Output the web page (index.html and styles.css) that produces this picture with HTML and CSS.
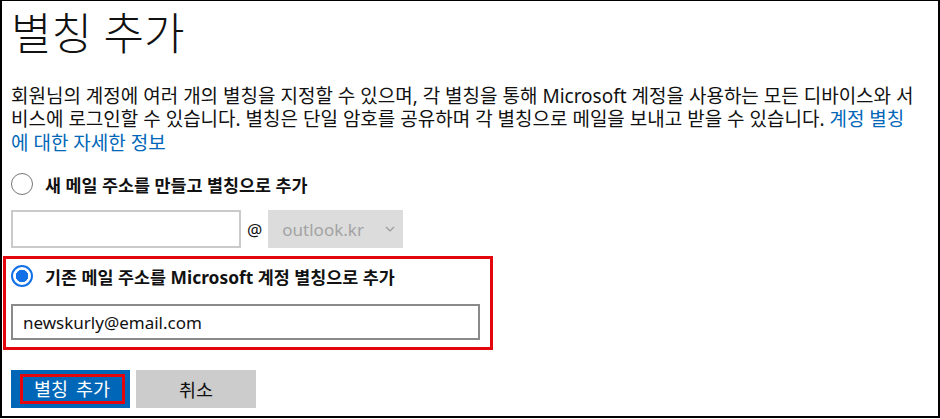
FILE: index.html
```html
<!DOCTYPE html>
<html lang="ko">
<head>
    <meta charset="UTF-8">
    <meta name="viewport" content="width=device-width, initial-scale=1.0">
    <title>별칭 추가</title>
    <link rel="stylesheet" href="styles.css">
</head>
<body>
    <div class="frame">
        <h1 class="page-title">별칭 추가</h1>

        <p class="intro">회원님의 계정에 여러 개의 별칭을 지정할 수 있으며, 각 별칭을 통해 Microsoft 계정을 사용하는 모든 디바이스와 서비스에 로그인할 수 있습니다. 별칭은 단일 암호를 공유하며 각 별칭으로 메일을 보내고 받을 수 있습니다. <a href="#" class="link">계정 별칭에 대한 자세한 정보</a></p>

        <!-- 새 메일 주소 -->
        <label class="option">
            <input type="radio" name="alias-type" class="radio">
            <span>새 메일 주소를 만들고 별칭으로 추가</span>
        </label>

        <div class="new-address">
            <input type="text" class="field field-light">
            <span class="at">@</span>
            <div class="domain">
                <span>outlook.kr</span>
                <svg class="chevron" width="10" height="6" viewBox="0 0 10 6">
                    <polyline points="1,1 5,5 9,1" fill="none" stroke="#9a9a9a" stroke-width="1.2"/>
                </svg>
            </div>
        </div>

        <!-- 기존 메일 주소 (강조 표시) -->
        <div class="highlight">
            <label class="option">
                <input type="radio" name="alias-type" class="radio" checked>
                <span>기존 메일 주소를 Microsoft 계정 별칭으로 추가</span>
            </label>
            <input type="text" class="field field-dark" value="newskurly@email.com">
        </div>

        <div class="actions">
            <button type="button" class="btn btn-primary"><span class="mark">별칭 추가</span></button>
            <button type="button" class="btn btn-cancel">취소</button>
        </div>
    </div>
</body>
</html>
```

FILE: styles.css
```css
:root {
    --text: #111;
    --link: #0067b8;
    --blue: #0067b8;
    --radio: #1371e8;
    --red: #e3060d;
}

* {
    box-sizing: border-box;
    margin: 0;
    padding: 0;
}

body {
    font-family: "Noto Sans", "Noto Sans CJK KR", sans-serif;
    color: var(--text);
    background: #fff;
}

/* 바깥 테두리 */
.frame {
    width: 940px;
    height: 418px;
    border: 2px solid #000;
    border-top-width: 1px;
    padding-left: 9px;
    overflow: hidden;
}

.page-title {
    font-size: 44px;
    font-weight: 300;
    line-height: 48px;
    margin-top: 8px;
}

.intro {
    width: 908px;
    font-size: 19px;
    line-height: 23.4px;
    margin-top: 28px;
}

.link {
    color: var(--link);
    text-decoration: none;
}

/* 라디오 옵션 */
.option {
    display: flex;
    align-items: center;
    gap: 12px;
    height: 24px;
    font-size: 17.4px;
    font-weight: bold;
}

.intro + .option {
    margin-top: 17px;
}

.radio {
    appearance: none;
    width: 22px;
    height: 22px;
    border: 1.5px solid #777;
    border-radius: 50%;
    background: #fff;
    flex-shrink: 0;
}

.radio:checked {
    border: 2px solid var(--radio);
    background: radial-gradient(circle, var(--radio) 0 6px, #fff 6.5px);
}

/* 새 주소 입력 줄 */
.new-address {
    display: flex;
    align-items: center;
    height: 38px;
    margin-top: 14px;
}

.field {
    font-family: inherit;
    font-size: 17px;
    color: var(--text);
    background: #fff;
    outline: none;
}

.field-light {
    width: 230px;
    height: 38px;
    border: 2px solid #cacaca;
}

.at {
    font-size: 17px;
    margin: 0 6px;
}

.domain {
    display: flex;
    align-items: center;
    justify-content: space-between;
    width: 135px;
    height: 38px;
    padding: 0 8px 0 14px;
    background: #dcdcdc;
    color: #a3a3a3;
    font-size: 17px;
}

/* 빨간 강조 박스 */
.highlight {
    width: 490px;
    margin: 8px 0 0 -8px;
    padding: 5px 0 7px 5px;
    border: 3px solid var(--red);
}

.field-dark {
    display: block;
    width: 469px;
    height: 36px;
    margin-top: 16px;
    padding: 0 10px;
    border: 2px solid #8a8a8a;
}

/* 버튼 */
.actions {
    display: flex;
    gap: 6px;
    margin-top: 20px;
}

.btn {
    display: flex;
    align-items: center;
    justify-content: center;
    height: 38px;
    border: none;
    font-family: inherit;
    font-size: 18.5px;
    cursor: pointer;
}

.btn-primary {
    width: 119px;
    background: var(--blue);
    color: #fff;
    padding-left: 3px;
}

.mark {
    display: block;
    width: 105px;
    height: 30px;
    line-height: 24px;
    border: 3px solid var(--red);
    text-align: center;
    word-spacing: 3px;
}

.btn-cancel {
    width: 120px;
    background: #ccc;
    color: var(--text);
}
```
